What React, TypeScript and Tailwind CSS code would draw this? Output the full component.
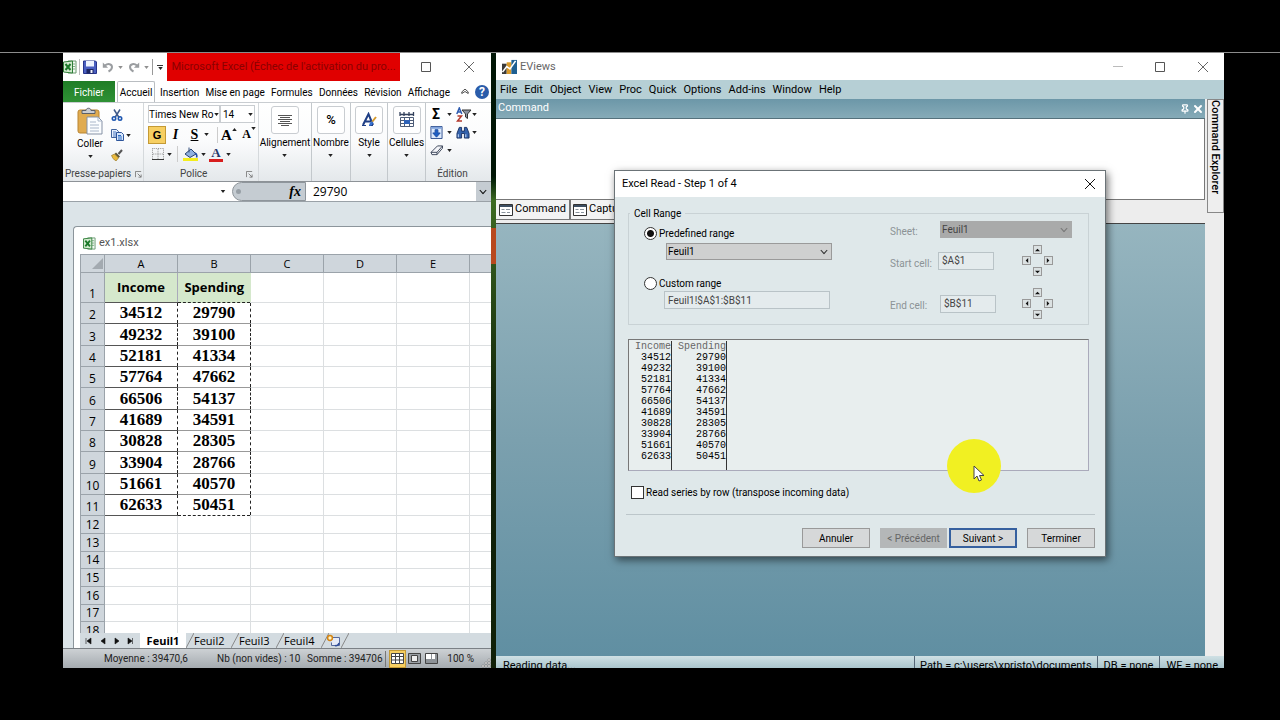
import type { ReactNode } from "react";
import { Pin, X } from "lucide-react";

const income = [34512, 49232, 52181, 57764, 66506, 41689, 30828, 33904, 51661, 62633];
const spending = [29790, 39100, 41334, 47662, 54137, 34591, 28305, 28766, 40570, 50451];
const emptyRows = [12, 13, 14, 15, 16, 17, 18];
const ribbonTabs = ["Insertion", "Mise en page", "Formules", "Données", "Révision", "Affichage"];
const sheetTabs = ["Feuil2", "Feuil3", "Feuil4"];
const menus = ["File", "Edit", "Object", "View", "Proc", "Quick", "Options", "Add-ins", "Window", "Help"];

const Caret = ({ className = "" }: { className?: string }) => (
  <svg viewBox="0 0 6 4" className={`h-[3px] w-[5px] shrink-0 ${className}`}>
    <path d="M0 0h6L3 4z" fill="#222" />
  </svg>
);

const Chevron = ({ color }: { color: string }) => (
  <svg viewBox="0 0 10 6" className="pointer-events-none absolute top-1/2 right-1 h-[5px] w-2 -translate-y-1/2">
    <path d="M1 .5l4 4.5 4-4.5" fill="none" stroke={color} strokeWidth="1.4" />
  </svg>
);

const ExcelLogo = ({ className }: { className: string }) => (
  <svg viewBox="0 0 14 14" className={className}>
    <path d="M5 1h8v12H5z" fill="#f4faf4" stroke="#6a9a70" />
    <path d="M9 4h3M9 6.500h3M9 9h3" stroke="#7fae85" />
    <path d="M.5 2l9-1v12l-9-1z" fill="#d3ebcf" stroke="#2f7d38" />
    <path d="M2.500 4l5 6M7.500 4l-5 6" stroke="#1d7a2b" strokeWidth="2" />
  </svg>
);

const SaveIcon = () => (
  <svg viewBox="0 0 14 14" className="h-[14px] w-[14px]">
    <path d="M.5 1h12l1 1v11.500H.5z" fill="#4a5fc0" stroke="#27348b" />
    <path d="M3 1h8v5.500H3z" fill="#eef3ff" />
    <path d="M3.500 9h7v4.500h-7z" fill="#1c2560" />
    <path d="M7.500 10h2v3h-2z" fill="#f2f4ff" />
  </svg>
);

const UndoIcon = ({ flip = false }: { flip?: boolean }) => (
  <svg viewBox="0 0 12 12" className={flip ? "h-3 w-3 -scale-x-100" : "h-3 w-3"}>
    <path d="M3 4.500c3-2.500 7-1.500 7 1.500 0 2.200-1.500 3.500-3.500 4.500" fill="none" stroke="#9a9da0" strokeWidth="2" />
    <path d="M.8 1.500v5.300h5.300z" fill="#9a9da0" />
  </svg>
);

const MaximizeIcon = () => (
  <svg viewBox="0 0 12 12" className="h-3 w-3">
    <path d="M1.500 1.500h9v9h-9z" fill="none" stroke="#555" />
  </svg>
);

const CloseIcon = ({ color = "#666" }: { color?: string }) => (
  <svg viewBox="0 0 12 12" className="h-3 w-3">
    <path d="M1 1l10 10M11 1L1 11" fill="none" stroke={color} />
  </svg>
);

const PasteIcon = () => (
  <svg viewBox="0 0 26 28" className="h-7 w-[26px]">
    <rect x="1" y="3" width="21" height="23" rx="2" fill="#e0ab50" stroke="#b98431" />
    <path d="M5 6.500V3.500h4c0-3 5-3 5 0h4v3z" fill="#c9ccd2" stroke="#5c6068" />
    <path d="M10 10h11l4 4v13H10z" fill="#fbfdff" stroke="#8591a5" />
    <path d="M21 10v4h4M13 15h6M13 18h9M13 21h9M13 24h9" fill="none" stroke="#a9b6c9" />
  </svg>
);

const CutIcon = () => (
  <svg viewBox="0 0 12 12" className="h-3 w-3">
    <path d="M3 .5l5 8M9 .5l-5 8" stroke="#3f5a8a" strokeWidth="1.500" />
    <circle cx="3" cy="9.500" r="1.700" fill="none" stroke="#1d56b0" strokeWidth="1.600" />
    <circle cx="9" cy="9.500" r="1.700" fill="none" stroke="#1d56b0" strokeWidth="1.600" />
  </svg>
);

const CopyIcon = () => (
  <svg viewBox="0 0 13 12" className="h-3 w-[13px]">
    <path d="M.5.5h5l2 2v6h-7z" fill="#e9f1fd" stroke="#41639c" />
    <path d="M2 3h3M2 5h4M2 7h3" stroke="#4b78c0" />
    <path d="M5.500 3.500h5l2 2v6h-7z" fill="#d7e6fb" stroke="#2d559b" />
    <path d="M7 6.500h3M7 8h4M7 10h4" stroke="#2d6bc0" />
  </svg>
);

const BrushIcon = () => (
  <svg viewBox="0 0 12 12" className="h-3 w-3">
    <path d="M11 1L7.500 5" stroke="#555" strokeWidth="2" />
    <path d="M5 3.500l4 4-1.500 1.500-4-4z" fill="#5b5434" />
    <path d="M3.500 5l4 4-2.500 3C3 11 1.500 9 .5 6.500z" fill="#e9b93c" stroke="#8c6b1f" strokeWidth=".6" />
  </svg>
);

const LauncherIcon = () => (
  <svg viewBox="0 0 8 8" className="h-[7px] w-[7px]">
    <path d="M.5 7V.5H7M3 3l4 4M7 4v3H4" fill="none" stroke="#777" />
  </svg>
);

const BordersIcon = () => (
  <svg viewBox="0 0 13 13" className="h-3 w-3">
    <path d="M.5.5h12v12M.5.5v12M6.500 1v11M1 6.500h11" fill="none" stroke="#888" strokeDasharray="1 1" />
    <path d="M0 12.500h13" stroke="#222" />
  </svg>
);

const FillIcon = () => (
  <svg viewBox="0 0 15 14" className="h-[14px] w-[15px]">
    <path d="M2 7l6-5 5 5-6 3.500z" fill="#8fb0e0" stroke="#2a4470" />
    <path d="M6 .5v5" stroke="#35507f" />
    <path d="M12 6c2 1 2 3 1.500 4.500" stroke="#1f4fa8" strokeWidth="1.600" fill="none" />
    <path d="M0 11h15v3H0z" fill="#f4ee1c" />
  </svg>
);

const StyleIcon = () => (
  <svg viewBox="0 0 16 16" className="h-4 w-4">
    <path d="M2 13L7.500 2 12 13M4 9.500h6" fill="none" stroke="#1f3f86" strokeWidth="2" />
    <path d="M1 13.500h4M8 13.500h4" stroke="#1f3f86" />
    <path d="M15 5l-4 5" stroke="#d69a2b" strokeWidth="2" />
    <path d="M8 14c0-3 2-4.500 3.500-4.500 1 1 .5 4-3.500 4.500z" fill="#356fd0" />
  </svg>
);

const CellsIcon = () => (
  <svg viewBox="0 0 16 16" className="h-4 w-4">
    <path d="M1 0v4M5 0v4M10 0v4M14.500 0v4M1 2.500h13" stroke="#33415c" strokeWidth="1.300" />
    <path d="M1.500 5.500h13v9h-13zM1.500 8.500h13M1.500 11.500h13M5.500 5.500v9M10.500 5.500v9" fill="#fff" stroke="#4d5c77" />
    <path d="M5 8h6v4H5z" fill="#2e63b8" />
  </svg>
);

const FillDownIcon = () => (
  <svg viewBox="0 0 14 14" className="h-[13px] w-[13px]">
    <path d="M1 .5h12v13H1z" fill="#dce9fb" stroke="#2a4c8c" />
    <path d="M1.500 1h11v2h-11z" fill="#7fa3dc" />
    <path d="M5.500 4h3v3.500H11L7 12 3 7.500h2.500z" fill="#1d5fc4" stroke="#1d4fa4" />
  </svg>
);

const SortFilterIcon = () => (
  <svg viewBox="0 0 16 15" className="h-[15px] w-4">
    <path d="M.8 7L3.300 1l2.500 6M1.800 5h3" fill="none" stroke="#2d5bb0" strokeWidth="1.500" />
    <path d="M1.500 9h4l-4 5h4.500" fill="none" stroke="#b33a2e" strokeWidth="1.500" />
    <path d="M6 3h9l-3.500 4v4.500L9.500 10V7z" fill="#8b93a1" stroke="#333" />
  </svg>
);

const BinocularsIcon = () => (
  <svg viewBox="0 0 15 14" className="h-[13px] w-[14px]">
    <path d="M3.500 1.500h2.500v4h3v-4h2.500L14 8v5H9V8H6v5H1V8z" fill="#3563ad" stroke="#172e60" />
    <path d="M2.500 9v3M10.500 9v3" stroke="#b8d0f4" strokeWidth="1.200" />
  </svg>
);

const EraserIcon = () => (
  <svg viewBox="0 0 15 12" className="h-[11px] w-[14px]">
    <path d="M1 8l7-7h5.500v2.500L7.500 10.500H2z" fill="#f3f4f8" stroke="#333e52" />
    <path d="M7.500 10.500V8L13.500 1M1 8h6.500" fill="none" stroke="#333e52" />
  </svg>
);

const NewSheetIcon = () => (
  <svg viewBox="0 0 15 13" className="h-[13px] w-[15px]">
    <path d="M4.500 3.500h9v8h-8v-3" fill="#e6ebf7" stroke="#566a9c" />
    <path d="M9 11.500c2 .5 3.500-.5 4-2.500" stroke="#2f4d9b" strokeWidth="1.500" fill="none" />
    <circle cx="4" cy="4" r="2.400" fill="#fff3c4" stroke="#d48413" strokeWidth="1.500" />
  </svg>
);

const EViewsLogo = () => (
  <svg viewBox="0 0 16 16" className="h-[15px] w-[15px]">
    <path d="M0 5h5v11H0z" fill="#3a3a3a" />
    <path d="M5 3.500h5V16H5z" fill="#d99a2b" />
    <path d="M10 1h6v15h-6z" fill="#1e5f92" />
    <path d="M.5 14L5 8l3.500 2.500L14.500 2" fill="none" stroke="#fff" strokeWidth="1.700" />
  </svg>
);

const WindowIcon = () => (
  <svg viewBox="0 0 14 12" className="h-3 w-[14px] shrink-0">
    <path d="M.5.5h13v11H.5z" fill="#fff" stroke="#333" />
    <path d="M1 1h12v2H1z" fill="#3d4f63" />
    <path d="M2.500 5.500h3M7 5.500h4M2.500 8.500h4M8 8.500h3" stroke="#8a949e" />
  </svg>
);

const TabSlash = () => (
  <svg viewBox="0 0 8 15" className="h-[15px] w-2 shrink-0">
    <path d="M0 15L8 0" stroke="#888" />
  </svg>
);

const RibbonGroup = ({ label, icon, width }: { label: string; icon: ReactNode; width: string }) => (
  <div className={`flex shrink-0 flex-col items-center border-r border-[#c3c8cc] pt-[3px] ${width}`}>
    <button className="flex flex-col items-center">
      <span className="flex h-7 w-7 items-center justify-center rounded-[3px] border border-[#c9cdd1] bg-white">
        {icon}
      </span>
      <span className="mt-[3px] leading-3">{label}</span>
      <Caret className="mt-[5px]" />
    </button>
  </div>
);

const Ribbon = () => (
  <div className="flex h-[79px] shrink-0 border-b border-[#8d9297] bg-linear-to-b from-white via-[#fafbfc] to-[#e4e8eb] text-[10px]">
    <div className="flex w-[81px] shrink-0 flex-col justify-between border-r border-[#d5d9dc] pt-1">
      <div className="flex">
        <button className="flex w-[54px] flex-col items-center">
          <PasteIcon />
          <span className="mt-[3px] leading-3">Coller</span>
          <Caret className="mt-[5px]" />
        </button>
        <div className="-ml-[6px] flex flex-col gap-2 pt-[2px]">
          <button aria-label="Couper"><CutIcon /></button>
          <button aria-label="Copier" className="flex items-center gap-[2px]"><CopyIcon /><Caret /></button>
          <button aria-label="Reproduire la mise en forme"><BrushIcon /></button>
        </div>
      </div>
      <div className="flex items-center gap-1 pl-[2px] leading-[14px] whitespace-nowrap text-[#444]">
        Presse-papiers <LauncherIcon />
      </div>
    </div>

    <div className="flex w-[115px] shrink-0 flex-col justify-between border-r border-[#d5d9dc] pt-[2px] pl-1">
      <div className="flex flex-col gap-[2px]">
        <div className="flex">
          <div className="relative">
            <select aria-label="Police" className="h-[18px] w-[72px] appearance-none border border-[#c9cdd1] bg-white">
              <option>Times New Ro</option>
            </select>
            <Caret className="pointer-events-none absolute top-2 right-[1px]" />
          </div>
          <div className="relative">
            <select aria-label="Taille" className="h-[18px] w-[35px] appearance-none border border-[#c9cdd1] bg-white pl-[2px]">
              <option>14</option>
            </select>
            <Caret className="pointer-events-none absolute top-2 right-[2px]" />
          </div>
        </div>
        <div className="flex items-center font-['Liberation_Serif',serif]">
          <button className="h-[18px] w-[18px] border border-[#c49a35] bg-[#f7cf62] font-['Liberation_Sans',sans-serif] text-[11px] leading-4 font-bold">G</button>
          <button className="w-[19px] text-sm leading-[18px] font-bold italic">I</button>
          <button className="w-[19px] text-sm leading-[18px] font-bold underline">S</button>
          <Caret />
          <span className="ml-2 h-4 w-px bg-[#ccc]" />
          <button aria-label="Agrandir" className="flex w-[22px] items-start justify-center text-[15px] leading-[18px] font-bold">
            A<Caret className="mt-[2px] rotate-180" />
          </button>
          <button aria-label="Réduire" className="flex w-[18px] items-start justify-center text-xs leading-[19px] font-bold">
            A<Caret className="mt-[2px]" />
          </button>
        </div>
        <div className="flex items-center gap-[3px] pl-1">
          <button aria-label="Bordures" className="flex items-center gap-[3px]"><BordersIcon /><Caret /></button>
          <span className="mx-[2px] h-4 w-px bg-[#ccc]" />
          <button aria-label="Remplissage" className="flex items-center gap-[3px]"><FillIcon /><Caret /></button>
          <button aria-label="Couleur" className="flex items-center gap-[3px]">
            <span className="h-[15px] w-[14px] border-b-[3px] border-[#d81e1e] text-center font-['Liberation_Serif',serif] text-[13px] leading-3 font-bold text-[#26386b]">A</span>
            <Caret />
          </button>
        </div>
      </div>
      <div className="flex items-center justify-between pr-[5px] pl-[32px] leading-[14px] text-[#444]">
        Police <LauncherIcon />
      </div>
    </div>

    <RibbonGroup
      label="Alignement"
      width="w-[53px]"
      icon={
        <svg viewBox="0 0 14 14" className="h-[14px] w-[14px]">
          <path d="M0 2.500h14M2 4.500h10M0 6.500h14M2 8.500h10M0 10.500h14M3 12.500h8" stroke="#555" />
        </svg>
      }
    />
    <RibbonGroup label="Nombre" width="w-[39px]" icon={<span className="text-[13px] font-medium">%</span>} />
    <RibbonGroup label="Style" width="w-[37px]" icon={<StyleIcon />} />
    <RibbonGroup label="Cellules" width="w-[38px]" icon={<CellsIcon />} />

    <div className="flex flex-1 flex-col justify-between pt-1 pl-1">
      <div className="grid grid-cols-[26px_26px] gap-y-1">
        <button aria-label="Somme" className="flex h-[14px] items-center gap-[5px]">
          <span className="w-3 text-sm leading-[14px] font-bold">Σ</span><Caret />
        </button>
        <button aria-label="Trier et filtrer" className="flex h-[14px] items-center"><SortFilterIcon /><Caret /></button>
        <button aria-label="Recopier" className="flex h-[14px] items-center gap-1"><FillDownIcon /><Caret /></button>
        <button aria-label="Rechercher" className="flex h-[14px] items-center gap-[2px]"><BinocularsIcon /><Caret /></button>
        <button aria-label="Effacer" className="flex h-[14px] items-center gap-[3px]"><EraserIcon /><Caret /></button>
      </div>
      <div className="pr-4 text-center leading-[14px] text-[#444]">Édition</div>
    </div>
  </div>
);

const SheetTable = () => (
  <table className="w-[412px] table-fixed border-collapse bg-white text-center font-['Open_Sans',sans-serif]">
    <colgroup>
      <col className="w-6" />
      <col className="w-[73px]" />
      <col className="w-[73px]" />
      <col className="w-[73px]" />
      <col className="w-[73px]" />
      <col className="w-[73px]" />
      <col />
    </colgroup>
    <thead>
      <tr className="h-[18px] bg-[#cfd6dc] text-[11px] leading-4">
        <th className="border border-[#9ba3aa]">
          <svg viewBox="0 0 12 12" className="ml-auto h-3 w-3"><path d="M11 0v11H0z" fill="#a3aab0" /></svg>
        </th>
        {["A", "B", "C", "D", "E", ""].map((col, i) => (
          <th key={i} className="border border-[#9ba3aa] font-normal">{col}</th>
        ))}
      </tr>
    </thead>
    <tbody>
      <tr className="h-[30px]">
        <th className="border border-[#9ba3aa] bg-[#cfd6dc] align-bottom text-xs leading-4 font-normal">1</th>
        <td className="border-r border-b border-r-[#aab] border-b-[#555] bg-[#d5e8cc] text-[13px] font-bold">Income</td>
        <td className="border-b border-dashed border-[#222] bg-[#d5e8cc] text-[13px] font-bold">Spending</td>
        {[0, 1, 2, 3].map((c) => <td key={c} className="border-r border-b border-[#dcdfe1]" />)}
      </tr>
      {income.map((value, i) => (
        <tr key={value} className={i % 3 === 1 ? "h-[22px]" : "h-[21px]"}>
          <th className="border border-[#9ba3aa] bg-[#cfd6dc] align-bottom text-xs leading-4 font-normal">{i + 2}</th>
          <td className="border-b border-[#555] font-['Liberation_Serif',serif] text-[17px] leading-5 font-bold">{value}</td>
          <td
            className={`border-x border-x-[#222] font-['Liberation_Serif',serif] text-[17px] leading-5 font-bold [border-left-style:dashed] [border-right-style:dashed] ${
              i === 9 ? "border-b border-b-[#222] [border-bottom-style:dashed]" : "border-b border-b-[#999]"
            }`}
          >
            {spending[i]}
          </td>
          {[0, 1, 2, 3].map((c) => <td key={c} className="border-r border-b border-[#dcdfe1]" />)}
        </tr>
      ))}
      {emptyRows.map((row) => (
        <tr key={row} className={row % 3 === 2 ? "h-[17px]" : "h-[18px]"}>
          <th className="border border-[#9ba3aa] bg-[#cfd6dc] align-bottom text-xs leading-4 font-normal">{row}</th>
          {[0, 1, 2, 3, 4, 5].map((c) => <td key={c} className="border-r border-b border-[#dcdfe1]" />)}
        </tr>
      ))}
    </tbody>
  </table>
);

const ExcelWindow = () => (
  <section className="flex min-w-0 flex-col overflow-hidden bg-white text-black">
    <header className="flex h-7 shrink-0 items-center">
      <ExcelLogo className="h-[14px] w-[14px]" />
      <span className="mx-[2px] h-4 w-px bg-[#bbb]" />
      <button aria-label="Enregistrer" className="ml-[1px]"><SaveIcon /></button>
      <button aria-label="Annuler" className="ml-[5px] flex items-center gap-1"><UndoIcon /><Caret className="opacity-50" /></button>
      <button aria-label="Rétablir" className="ml-[5px] flex items-center gap-1"><UndoIcon flip /><Caret className="opacity-50" /></button>
      <span className="ml-[3px] h-4 w-px bg-[#999]" />
      <span className="mx-1 flex flex-col items-center gap-[1px]">
        <span className="h-px w-[6px] bg-[#333]" />
        <Caret />
      </span>
      <h1 className="h-7 w-[233px] bg-[#e00000] text-center text-[11px] leading-7 whitespace-nowrap text-[#8a0000]">
        Microsoft Excel (Échec de l'activation du pro...
      </h1>
      <button aria-label="Agrandir la fenêtre" className="ml-5"><MaximizeIcon /></button>
      <button aria-label="Fermer" className="ml-[31px]"><CloseIcon /></button>
    </header>

    <nav className="flex h-[22px] shrink-0 items-stretch border-b border-[#c9cdd1] text-[10px] leading-[23px]">
      <button className="w-[52px] bg-linear-to-b from-[#1f7d26] to-[#2f9135] text-white">Fichier</button>
      <button className="ml-[2px] w-[38px] rounded-t-[2px] border border-b-0 border-[#b9bdc1] bg-white leading-[21px]">Accueil</button>
      <div className="flex flex-1 justify-between pr-[11px] pl-[5px]">
        {ribbonTabs.map((tab) => <button key={tab}>{tab}</button>)}
      </div>
      <button aria-label="Réduire le ruban" className="pr-[6px]">
        <svg viewBox="0 0 10 8" className="h-[7px] w-2"><path d="M1 4.500L5 1l4 3.500v2L5 4 1 6.500z" fill="#fff" stroke="#222" /></svg>
      </button>
      <button aria-label="Aide" className="mt-1 mr-[2px] h-[14px] w-[14px] rounded-full bg-[#2a5caa] text-xs leading-[14px] font-bold text-white">?</button>
    </nav>

    <Ribbon />

    <div className="flex h-5 shrink-0 border-b border-[#9aa1a7] bg-white">
      <div className="flex w-[169px] items-center justify-end pr-[6px]"><Caret className="h-1 w-[6px]" /></div>
      <div className="flex w-[74px] items-center justify-between rounded-l-full border border-[#8e959b] bg-[#c5ccd2] pr-1 pl-[3px]">
        <span className="h-[5px] w-[5px] rounded-full bg-[#98a0a7]" />
        <span className="font-['Liberation_Serif',serif] text-sm leading-4 font-bold italic">fx</span>
      </div>
      <input aria-label="Barre de formule" defaultValue="29790" className="min-w-0 flex-1 bg-white pl-[7px] font-['Open_Sans',sans-serif] text-xs outline-none" />
      <button aria-label="Développer" className="relative w-[15px] bg-[#c5ccd2]"><Chevron color="#111" /></button>
    </div>

    <div className="flex min-h-0 flex-1 flex-col bg-[#dce4e8] pt-6 pl-[10px]">
      <div className="flex min-h-0 flex-1 flex-col overflow-hidden rounded-tl-[4px] border-t border-l border-[#8c959b] bg-white pl-[6px]">
        <div className="flex h-[27px] shrink-0 items-center gap-[3px] pt-[6px] pl-[3px] text-[11px] text-[#555]">
          <ExcelLogo className="h-[13px] w-[13px]" /> ex1.xlsx
        </div>
        <div className="min-h-0 flex-1 overflow-hidden">
          <SheetTable />
        </div>
        <div className="flex h-[15px] shrink-0 bg-[#d3dbe0] font-['Open_Sans',sans-serif] text-[11px] leading-[15px]">
          <div className="flex w-[60px] shrink-0 items-center px-[5px]">
            <svg viewBox="0 0 48 8" className="h-2 w-12">
              <path d="M1 1v6M6 1v6L2 4zM20 1v6l-4-3zM30 1v6l4-3zM43 1v6l4-3zM47.500 1v6" fill="#111" stroke="#111" strokeWidth=".6" />
            </svg>
          </div>
          <button className="w-[46px] bg-white text-center font-bold">Feuil1</button>
          {sheetTabs.map((tab) => (
            <button key={tab} className="flex w-[45px]">
              <TabSlash />
              {tab}
            </button>
          ))}
          <TabSlash />
          <button aria-label="Nouvelle feuille" className="-ml-[3px]"><NewSheetIcon /></button>
          <TabSlash />
        </div>
      </div>
    </div>

    <footer className="flex h-5 shrink-0 items-center border-t border-[#7b8085] bg-linear-to-b from-[#cdd1d4] to-[#a5abb0] text-[10px] whitespace-nowrap text-[#222]">
      <span className="w-[113px] shrink-0 pl-[41px]">Moyenne : 39470,6</span>
      <span className="ml-[41px] w-[90px] shrink-0">Nb (non vides) : 10</span>
      <span>Somme : 394706</span>
      <span className="ml-auto h-4 w-px bg-[#777]" />
      <button aria-label="Normal" className="ml-[3px] flex h-[18px] w-[17px] items-center justify-center border border-[#c49a35] bg-[#f7cf62]">
        <svg viewBox="0 0 13 11" className="h-[11px] w-[13px]">
          <path d="M.5.5h12v10H.5zM.5 3.500h12M.5 7h12M4.500.5v10M8.500.5v10" fill="#fff" stroke="#444" />
        </svg>
      </button>
      <button aria-label="Mise en page" className="ml-[2px]">
        <svg viewBox="0 0 13 11" className="h-[11px] w-[13px]">
          <path d="M.5.5h12v10H.5z" fill="#9a9fa4" stroke="#444" /><path d="M3.500 2.500h6v6h-6z" fill="#eee" stroke="#444" />
        </svg>
      </button>
      <button aria-label="Aperçu des sauts de page" className="ml-1">
        <svg viewBox="0 0 13 11" className="h-[11px] w-[13px]">
          <path d="M.5.5h12v10H.5z" fill="#8d9297" stroke="#444" /><path d="M1 1h5v5H1zM7 1h3v5H7z" fill="#fff" />
        </svg>
      </button>
      <span className="ml-[9px]">100 %</span>
      <svg viewBox="0 0 10 10" className="mt-auto ml-[7px] h-[10px] w-[10px]">
        <path d="M7 1h2v2H7zM4 4h2v2H4zM7 4h2v2H7zM1 7h2v2H1zM4 7h2v2H4zM7 7h2v2H7z" fill="#eee" stroke="#666" strokeWidth=".4" />
      </svg>
    </footer>
  </section>
);

const PadButton = ({ label, d, className }: { label: string; d: string; className: string }) => (
  <button aria-label={label} disabled className={`flex h-[9px] w-[9px] items-center justify-center border border-[#999] bg-[#dbe1e2] ${className}`}>
    <svg viewBox="0 0 6 6" className="h-[5px] w-[5px]"><path d={d} fill="#111" /></svg>
  </button>
);

const DirectionPad = () => (
  <div className="grid h-[33px] w-[33px] shrink-0 grid-cols-3 grid-rows-3 place-items-center">
    <PadButton label="Haut" d="M0 5l3-3 3 3z" className="col-start-2" />
    <PadButton label="Gauche" d="M5 0v6L2 3z" className="col-start-1" />
    <PadButton label="Droite" d="M1 0v6l3-3z" className="col-start-3" />
    <PadButton label="Bas" d="M0 2h6L3 5z" className="col-start-2" />
  </div>
);

const PreviewColumn = ({ title, values, className }: { title: string; values: number[]; className: string }) => (
  <div className={`h-full border-r border-[#333] text-right ${className}`}>
    <div className="text-[#666]">{title}</div>
    {values.map((v) => <div key={v}>{v}</div>)}
  </div>
);

const ImportDialog = () => (
  <div
    role="dialog"
    aria-labelledby="dialog-title"
    className="absolute top-[117px] left-[118px] w-[492px] border border-[#6b7377] bg-[#dfe8ea] pb-2 text-[10px] text-black shadow-[2px_3px_8px_rgba(0,0,0,0.55)]"
  >
    <div className="flex h-[26px] items-center justify-between bg-white pr-[9px] pl-[7px]">
      <h2 id="dialog-title" className="pt-[1px] text-[11px]">Excel Read - Step 1 of 4</h2>
      <button aria-label="Fermer"><CloseIcon color="#111" /></button>
    </div>

    <div className="pt-[9px] pr-3 pl-[13px]">
      <fieldset className="mr-1 flex h-[119px] justify-between border border-[#c9d2d5] pr-4 pl-[15px]">
        <legend className="-ml-[14px] px-1 leading-[15px]">Cell Range</legend>
        <div className="w-[190px] pt-[2px]">
          <label className="flex h-5 items-center gap-[2px]">
            <input type="radio" name="range" defaultChecked className="m-0 h-[13px] w-[13px] appearance-none rounded-full border border-[#333] bg-[radial-gradient(circle,#111_3px,#fff_4px)]" />
            Predefined range
          </label>
          <div className="relative ml-[22px] w-[166px]">
            <select aria-label="Feuille" className="h-[17px] w-full appearance-none border border-[#9a9a9a] bg-[#cfd0d0] pl-[1px]">
              <option>Feuil1</option>
            </select>
            <Chevron color="#333" />
          </div>
          <label className="mt-[13px] flex h-5 items-center gap-[2px]">
            <input type="radio" name="range" className="m-0 h-[13px] w-[13px] appearance-none rounded-full border border-[#333] bg-white" />
            Custom range
          </label>
          <input aria-label="Plage" readOnly value="Feuil1!$A$1:$B$11" className="-mt-[2px] ml-5 block h-[18px] w-[166px] border border-[#b9c3c7] bg-[#e4ebed] pl-[3px] text-[#444]" />
        </div>

        <div className="flex w-[182px] flex-col">
          <div className="-mt-[1px] flex items-center">
            <label htmlFor="sheet" className="w-[50px] pt-1 text-[#8c9396]">Sheet:</label>
            <div className="relative w-[132px]">
              <select id="sheet" disabled className="h-[17px] w-full appearance-none bg-[#a9aaaa] pl-[2px] text-[#444] opacity-100">
                <option>Feuil1</option>
              </select>
              <Chevron color="#777" />
            </div>
          </div>
          <div className="mt-[5px] flex h-[33px] items-center">
            <label htmlFor="start" className="w-12 pt-[5px] text-[#8c9396]">Start cell:</label>
            <input id="start" readOnly value="$A$1" className="mr-[27px] h-[18px] w-14 border border-[#b9c3c7] bg-[#e4ebed] pl-[3px] text-[#444]" />
            <DirectionPad />
          </div>
          <div className="mt-[10px] flex h-[33px] items-center">
            <label htmlFor="end" className="w-[50px] pt-[3px] text-[#8c9396]">End cell:</label>
            <input id="end" readOnly value="$B$11" className="mr-[25px] h-[18px] w-14 border border-[#b9c3c7] bg-[#e4ebed] pl-[3px] text-[#444]" />
            <DirectionPad />
          </div>
        </div>
      </fieldset>

      <div className="mt-[14px] mr-1 flex h-[132px] border border-t-[#777] border-r-[#aab] border-b-[#aab] border-l-[#777] bg-[#e8eeee] pt-[1px] font-['Liberation_Mono',monospace] text-[10px] leading-[11px]">
        <PreviewColumn title="Income" values={income} className="w-[43px]" />
        <PreviewColumn title="Spending" values={spending} className="w-[55px]" />
      </div>

      <label className="mt-[14px] ml-[3px] flex h-[15px] items-center gap-[2px]">
        <input type="checkbox" className="m-0 h-[13px] w-[13px] appearance-none border border-[#333] bg-white" />
        Read series by row (transpose incoming data)
      </label>

      <div className="mt-[14px] -mr-[2px] -ml-[2px] border-t border-[#bcc6ca] pt-[13px]">
        <div className="flex justify-end">
          <button className="h-5 w-[68px] border border-[#999] bg-[#d6d8d9]">Annuler</button>
          <button disabled className="mr-[2px] ml-[10px] h-5 w-[67px] bg-[#b4b7b8] text-[#666]">&lt; Précédent</button>
          <button className="h-5 w-[68px] border-2 border-[#36609f] bg-[#d6d8d9]">Suivant &gt;</button>
          <button className="ml-[10px] h-5 w-[68px] border border-[#999] bg-[#d6d8d9]">Terminer</button>
        </div>
      </div>
    </div>

    {/* Click highlight and mouse pointer */}
    <div className="pointer-events-none absolute top-[268px] left-[332px] h-[54px] w-[54px] rounded-full bg-[#f1f022]">
      <svg viewBox="0 0 12 17" className="absolute top-[26px] left-[26px] h-[17px] w-3">
        <path d="M1 1v13l3-3 2 5 2.500-1L6.500 10.500H11z" fill="#fff" stroke="#444" />
      </svg>
    </div>
  </div>
);

const EViewsWindow = () => (
  <section className="relative flex min-w-0 flex-col bg-[#ededed] text-black">
    <header className="flex h-[27px] shrink-0 items-center bg-white pr-[15px] pl-[6px] text-[11px] text-[#666]">
      <EViewsLogo />
      <h1 className="ml-[3px] pt-[2px]">EViews</h1>
      <button aria-label="Réduire" className="mr-[31px] ml-auto h-3 w-[10px]"><span className="block h-px bg-[#bbb]" /></button>
      <button aria-label="Agrandir" className="mr-[31px]"><MaximizeIcon /></button>
      <button aria-label="Fermer"><CloseIcon /></button>
    </header>
    <nav className="flex h-[19px] shrink-0 items-center gap-[7px] bg-[#b6cfd5] pt-[2px] pl-1 text-[11px]">
      {menus.map((menu) => <button key={menu}>{menu}</button>)}
    </nav>

    <div className="flex min-h-0 flex-1">
      <div className="flex min-w-0 flex-1 flex-col">
        <div className="flex h-5 shrink-0 items-center border-b border-[#55717c] bg-linear-to-b from-[#6c97a8] to-[#86abb8] pl-[2px] text-[11px] text-white">
          Command
          <button aria-label="Épingler" className="ml-auto"><Pin size={10} strokeWidth={3} /></button>
          <button aria-label="Masquer" className="mr-[1px] ml-[2px]"><X size={12} strokeWidth={4} /></button>
        </div>
        <textarea aria-label="Command" className="block h-[81px] shrink-0 resize-none border-r border-b border-[#777] bg-white outline-none" />
        <div className="flex h-6 shrink-0 items-start border-b border-[#444] text-[11px]">
          <button className="flex h-5 items-center gap-[2px] border-r-2 border-b border-[#777] bg-[#f3f3f3] pr-[3px] pl-[3px]"><WindowIcon />Command</button>
          <button className="flex h-5 items-center gap-[2px] border-b border-[#777] bg-[#f3f3f3] pr-1 pl-[2px]"><WindowIcon />Capture</button>
        </div>
        <main className="flex-1 bg-linear-to-b from-[#96b5bf] via-[#7ba0ae] to-[#608fa2]" />
      </div>
      <aside className="w-[19px] shrink-0 pl-[2px]">
        <button className="h-[114px] w-[17px] border border-[#888] bg-[#eee] text-left text-[11px] leading-[15px] font-medium [writing-mode:vertical-rl]">
          Command Explorer
        </button>
      </aside>
    </div>

    <footer className="flex h-3 shrink-0 items-start justify-end overflow-hidden bg-linear-to-b from-[#cfe0e4] to-[#aac5cd] text-[11px] leading-[19px]">
      <span className="mr-auto pl-[7px]">Reading data...</span>
      <span className="border-l border-[#567] px-[5px]">Path = c:\users\xpristo\documents</span>
      <span className="border-l border-[#567] px-[6px]">DB = none</span>
      <span className="border-l border-[#567] px-[6px]">WF = none</span>
    </footer>

    <ImportDialog />
  </section>
);

export default function App() {
  return (
    <div className="flex h-screen min-h-[720px] flex-col bg-black pt-[52px] pb-[52px] font-['Roboto','Open_Sans',sans-serif] [&_button]:whitespace-nowrap">
      <div className="h-px shrink-0 bg-[#8c8c8c]" />
      <div className="grid min-h-0 flex-1 grid-cols-[428fr_5px_728fr] pr-14 pl-[63px]">
        <ExcelWindow />
        <div className="bg-linear-to-b from-[#001505] from-20% via-[#3d6b22] via-24% to-[#102008] to-60%">
          <div className="mt-[175px] h-9 bg-[#b8481d]" />
        </div>
        <EViewsWindow />
      </div>
    </div>
  );
}
